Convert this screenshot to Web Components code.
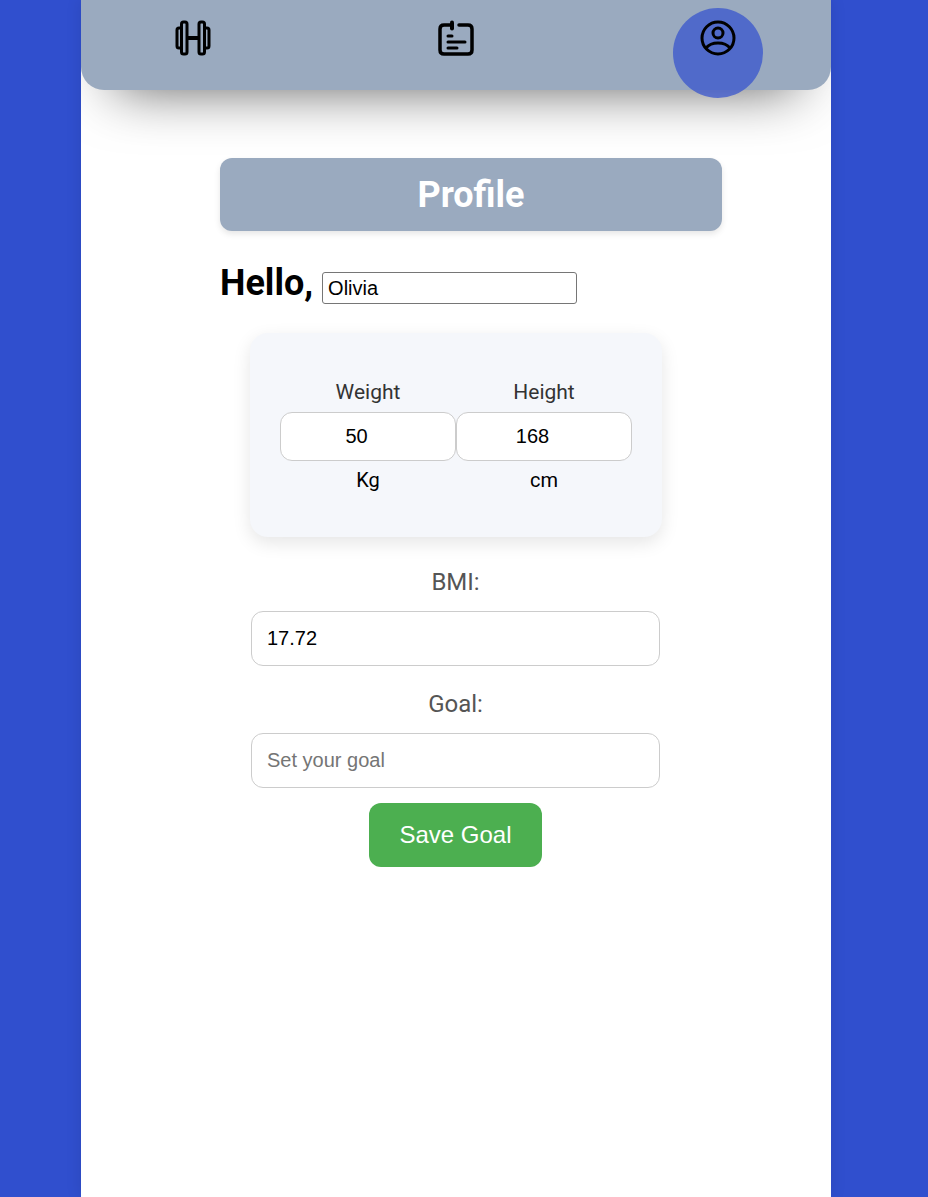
<!DOCTYPE html>
<html lang="en">
<head>
<meta charset="utf-8">
<meta name="viewport" content="width=device-width, initial-scale=1">
<title>Profile</title>
<style>
html { background: #304fce; }
body { margin: 0; font-family: Roboto, sans-serif; }
</style>
</head>
<body>
<profile-app></profile-app>
<script>
class BaseElement extends HTMLElement {
  render(html) {
    const template = document.createElement('template');
    template.innerHTML = `<style>*{box-sizing:border-box}</style>${html}`;
    this.attachShadow({ mode: 'open' }).append(template.content.cloneNode(true));
  }
}

customElements.define('nav-item', class extends BaseElement {
  constructor() {
    super();
    this.render(`
      <style>
        :host { display: block; }
        a { display: flex; justify-content: center; width: 90px; height: 90px; padding-top: 9px; border-radius: 50%; color: #000; }
        :host([active]) a { background: rgba(48, 79, 206, .7); }
      </style>
      <a href="#"><slot></slot></a>`);
  }
  connectedCallback() {
    this.shadowRoot.querySelector('a').setAttribute('aria-label', this.getAttribute('label'));
  }
});

customElements.define('nav-bar', class extends BaseElement {
  constructor() {
    super();
    this.render(`
      <style>
        :host { display: block; }
        /* The bar continues above the page edge so that its shadow stays full. */
        nav { display: flex; justify-content: space-between; height: 150px; margin-top: -60px; padding: 68px 68px 0 67px; background: #9aaabf; border-radius: 0 0 23px 23px; box-shadow: 0 32px 56px -34px rgba(0, 0, 0, .66); }
        svg { display: block; width: 42px; height: 42px; fill: none; stroke: currentColor; }
      </style>
      <nav>
        <nav-item label="Workouts">
          <svg viewBox="0 0 42 42" stroke-width="3">
            <rect x="9.5" y="5" width="5.5" height="32" rx="2"/><rect x="27" y="5" width="5.5" height="32" rx="2"/>
            <path d="M9.5 11H7q-2 0-2 2v16q0 2 2 2h2.5M32.5 11H35q2 0 2 2v16q0 2-2 2h-2.5"/><path stroke-width="4" d="M15 21h12"/>
          </svg>
        </nav-item>
        <nav-item label="Plan">
          <svg viewBox="0 0 42 42" stroke-width="3.5" stroke-linecap="round">
            <path d="M16 8H9q-4 0-4 4v21q0 4 4 4h24q4 0 4-4V12q0-4-4-4h-9"/>
            <path stroke-width="4" d="M17 5.5v6"/><path stroke-width="3" d="M13 19h4M13 25h17M13 31h9"/>
          </svg>
        </nav-item>
        <nav-item label="Profile" active>
          <svg viewBox="0 0 42 42" stroke-width="3">
            <circle cx="21" cy="21" r="16"/><circle cx="21" cy="16" r="5"/><path d="M9 31q4-5 12-5t12 5"/>
          </svg>
        </nav-item>
      </nav>`);
  }
});

customElements.define('page-title', class extends BaseElement {
  constructor() {
    super();
    this.render(`
      <style>
        :host { display: block; }
        h1 { margin: 0; padding: 16px 15px 14px; font-size: 36px; line-height: 43px; text-align: center; color: #fff; background: #9aaabf; border-radius: 12px; box-shadow: 0 3px 6px rgba(0, 0, 0, .1); }
      </style>
      <h1><slot></slot></h1>`);
  }
});

customElements.define('hello-name', class extends BaseElement {
  constructor() {
    super();
    this.render(`
      <style>
        :host { display: flex; align-items: baseline; gap: 9px; }
        label { font-size: 36px; line-height: 42px; font-weight: 700; }
        input { width: 255px; height: 32px; padding: 1px 5px 0; font: 20px "Liberation Sans", sans-serif; color: #000; background: #fff; border: 1px solid #767676; border-radius: 3px; }
      </style>
      <label for="name">Hello,</label><input id="name" type="text" value="Olivia">`);
  }
});

customElements.define('measure-field', class extends BaseElement {
  constructor() {
    super();
    this.render(`
      <style>
        :host { display: flex; flex-direction: column; align-items: center; flex: 1; min-width: 0; }
        label { margin-bottom: 8px; font-size: 21px; line-height: 24px; color: #333; }
        input { width: 100%; height: 49px; padding: 0 23px 0 15px; font: 20px "Liberation Sans", sans-serif; text-align: center; color: #000; background: #fff; border: 1px solid #ccc; border-radius: 12px; appearance: textfield; }
        span { margin-top: 7px; font-size: 20px; line-height: 24px; }
      </style>
      <label for="value"></label><input id="value" type="number"><span><slot></slot></span>`);
  }
  connectedCallback() {
    this.shadowRoot.querySelector('label').textContent = this.getAttribute('label');
    this.shadowRoot.querySelector('input').value = this.getAttribute('value');
  }
});

customElements.define('measure-card', class extends BaseElement {
  constructor() {
    super();
    this.render(`
      <style>
        :host { display: flex; padding: 47px 30px 45px; background: #f5f7fb; border-radius: 18px; box-shadow: 0 6px 18px rgba(0, 0, 0, .1); }
      </style>
      <slot></slot>`);
  }
});

customElements.define('form-field', class extends BaseElement {
  constructor() {
    super();
    this.render(`
      <style>
        :host { display: block; }
        label { display: block; margin-bottom: 15px; font-size: 24px; line-height: 28px; text-align: center; color: #555; }
        input { display: block; width: 100%; height: 55px; padding: 0 15px; font: 20px "Liberation Sans", sans-serif; color: #000; background: #fff; border: 1px solid #ccc; border-radius: 12px; }
        input::placeholder { color: #757575; }
      </style>
      <label for="field"></label><input id="field" type="text">`);
  }
  connectedCallback() {
    const input = this.shadowRoot.querySelector('input');
    this.shadowRoot.querySelector('label').textContent = this.getAttribute('label');
    input.value = this.getAttribute('value') || '';
    input.placeholder = this.getAttribute('placeholder') || '';
  }
});

customElements.define('save-button', class extends BaseElement {
  constructor() {
    super();
    this.render(`
      <style>
        :host { display: block; text-align: center; }
        button { padding: 18px 30px; font: 24px/28px "Liberation Sans", sans-serif; color: #fff; background: #4caf50; border: 0; border-radius: 12px; cursor: pointer; }
      </style>
      <button type="button"><slot></slot></button>`);
  }
});

customElements.define('profile-app', class extends BaseElement {
  constructor() {
    super();
    this.render(`
      <style>
        :host { display: block; padding-right: 16px; }
        .page { max-width: 750px; min-height: 100vh; margin: 0 auto; background: #fff; box-shadow: 0 0 15px rgba(0, 0, 0, .1); overflow: hidden; }
        main { max-width: 472px; margin: 0 auto; padding-top: 68px; }
        page-title { margin-right: -30px; }
        hello-name { margin-top: 31px; }
        .body { padding: 0 32px 0 31px; }
        measure-card { margin: 29px -2px 31px -1px; }
        form-field + form-field { margin-top: 24px; }
        save-button { margin-top: 15px; }
      </style>
      <div class="page">
        <nav-bar></nav-bar>
        <main>
          <page-title>Profile</page-title>
          <hello-name></hello-name>
          <div class="body">
            <measure-card>
              <measure-field label="Weight" value="50">Kg</measure-field>
              <measure-field label="Height" value="168">cm</measure-field>
            </measure-card>
            <form-field label="BMI:" value="17.72"></form-field>
            <form-field label="Goal:" placeholder="Set your goal"></form-field>
            <save-button>Save Goal</save-button>
          </div>
        </main>
      </div>`);
  }
});
</script>
</body>
</html>
